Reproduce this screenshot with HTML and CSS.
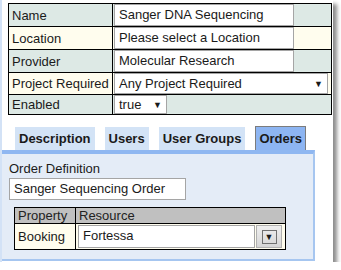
FILE: index.html
```html
<!DOCTYPE html>
<html lang="en">
<head>
    <meta charset="UTF-8">
    <title>Service Definition</title>
    <link rel="stylesheet" href="styles.css">
</head>
<body>
    <div class="frame">
        <table class="props">
            <tr class="row-a">
                <td class="label">Name</td>
                <td class="value"><div class="field">Sanger DNA Sequencing</div></td>
            </tr>
            <tr class="row-b">
                <td class="label">Location</td>
                <td class="value"><div class="field">Please select a Location</div></td>
            </tr>
            <tr class="row-a">
                <td class="label">Provider</td>
                <td class="value"><div class="field">Molecular Research</div></td>
            </tr>
            <tr class="row-b">
                <td class="label">Project Required</td>
                <td class="value"><div class="dropdown wide"><span>Any Project Required</span><span class="arrow">&#9660;</span></div></td>
            </tr>
            <tr class="row-a">
                <td class="label">Enabled</td>
                <td class="value"><div class="dropdown small"><span>true</span><span class="arrow">&#9660;</span></div></td>
            </tr>
        </table>

        <div class="tabs">
            <div class="tab">Description</div>
            <div class="tab">Users</div>
            <div class="tab">User Groups</div>
            <div class="tab active">Orders</div>
        </div>

        <div class="panel">
            <div class="panel-label">Order Definition</div>
            <div class="field order-name">Sanger Sequencing Order</div>

            <table class="resources">
                <tr class="head">
                    <td class="col-prop">Property</td>
                    <td>Resource</td>
                </tr>
                <tr class="row-b">
                    <td class="col-prop">Booking</td>
                    <td class="res-cell">
                        <div class="res-wrap">
                            <div class="field res-field">Fortessa</div>
                            <div class="res-btn"><span class="res-btn-inner">&#9660;</span></div>
                        </div>
                    </td>
                </tr>
            </table>
        </div>
    </div>
</body>
</html>
```

FILE: styles.css
```css
* {
    margin: 0;
    padding: 0;
    box-sizing: border-box;
}

body {
    font-family: 'Liberation Sans', Arial, sans-serif;
    font-size: 13px;
    color: #1a1a1a;
    background: white;
}

.frame {
    width: 333px;
    height: 262px;
    background: white;
    border-left: 2px solid #d3e2f6;
    padding-top: 3px;
    box-shadow: 4px 4px 4px rgba(0,0,0,0.45);
}

/* top property table */
.props {
    margin-left: 6px;
    width: 324px;
    border-collapse: collapse;
    border: 1px solid #000;
}

.props td {
    border: 1px solid #000;
}

.row-a {
    background: #dde9e5;
}

.row-b {
    background: #fffdee;
}

.props .label {
    width: 104px;
    padding: 0 3px;
    white-space: nowrap;
}

.props .value {
    padding: 0 1px;
}

.field {
    width: 180px;
    height: 22px;
    line-height: 20px;
    padding: 0 4px;
    background: white;
    border: 1px solid #a5a5a5;
    white-space: nowrap;
}

.dropdown {
    display: flex;
    justify-content: space-between;
    align-items: center;
    height: 21px;
    padding: 0 4px;
    background: white;
    border: 1px solid #a5a5a5;
}

.dropdown.wide {
    width: 214px;
}

.dropdown.small {
    width: 53px;
    height: 19px;
}

.arrow {
    font-size: 9px;
}

/* tabs */
.tabs {
    display: flex;
    gap: 10px;
    margin-top: 11px;
    padding-left: 13px;
    align-items: flex-end;
}

.tab {
    height: 23px;
    line-height: 23px;
    padding: 0 4px;
    background: #d3e3f6;
    font-weight: bold;
}

.tab.active {
    height: 24px;
    background: #8db5f2;
    border: 1px solid #7c7c7c;
    border-bottom: none;
    padding: 0 3px;
}

.panel {
    width: 313px;
    height: 111px;
    background: #e4ecf7;
    border: 2px solid #a6c6f0;
    border-top: 4px solid #8fb7f1;
    border-left: none;
    padding: 7px 0 0 7px;
}

.panel-label {
    line-height: 16px;
}

.order-name {
    margin-top: 1px;
    width: 177px;
}

/* resources table */
.resources {
    margin-top: 7px;
    margin-left: 5px;
    width: 272px;
    border-collapse: collapse;
    border: 1px solid #000;
}

.resources td {
    border: 1px solid #000;
    padding: 0 3px;
}

.resources .head {
    background: #c0c0c0;
    color: #222;
}

.resources .head td {
    height: 16px;
}

.col-prop {
    width: 61px;
}

.resources .res-cell {
    padding: 1px 2px;
}

.res-wrap {
    display: flex;
    gap: 1px;
}

.res-field {
    width: 177px;
    height: 23px;
}

.res-btn {
    width: 26px;
    height: 23px;
    display: flex;
    justify-content: center;
    align-items: center;
    background: linear-gradient(#efefef, #d6d6d6);
    border: 1px solid #b0b0b0;
}

.res-btn-inner {
    width: 15px;
    height: 14px;
    border: 1px solid #707070;
    font-size: 9px;
    line-height: 12px;
    text-align: center;
}
```
